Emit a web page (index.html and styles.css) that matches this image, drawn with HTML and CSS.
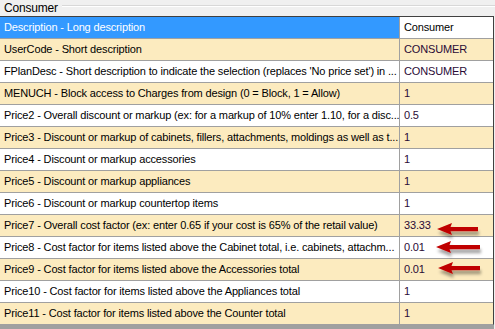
FILE: index.html
```html
<!DOCTYPE html>
<html>
<head>
<meta charset="utf-8">
<link rel="stylesheet" href="styles.css">
</head>
<body>
<div class="frame">
  <div class="caption"><span class="caption-text">Consumer</span><span class="caption-rule"></span></div>
  <div class="grid">
    <div class="row selected"><div class="name">Description - Long description</div><div class="val">Consumer</div></div>
    <div class="row alt"><div class="name">UserCode - Short description</div><div class="val">CONSUMER</div></div>
    <div class="row"><div class="name">FPlanDesc - Short description to indicate the selection (replaces 'No price set') in ...</div><div class="val">CONSUMER</div></div>
    <div class="row alt"><div class="name">MENUCH - Block access to Charges from design (0 = Block, 1 = Allow)</div><div class="val">1</div></div>
    <div class="row"><div class="name">Price2 - Overall discount or markup (ex: for a markup of 10% enter 1.10, for a disc...</div><div class="val">0.5</div></div>
    <div class="row alt"><div class="name">Price3 - Discount or markup of cabinets, fillers, attachments, moldings as well as t...</div><div class="val">1</div></div>
    <div class="row"><div class="name">Price4 - Discount or markup accessories</div><div class="val">1</div></div>
    <div class="row alt"><div class="name">Price5 - Discount or markup appliances</div><div class="val">1</div></div>
    <div class="row"><div class="name">Price6 - Discount or markup countertop items</div><div class="val">1</div></div>
    <div class="row alt"><div class="name">Price7 - Overall cost factor (ex: enter 0.65 if your cost is 65% of the retail value)</div><div class="val">33.33</div></div>
    <div class="row"><div class="name">Price8 - Cost factor for items listed above the Cabinet total, i.e. cabinets, attachm...</div><div class="val">0.01</div></div>
    <div class="row alt"><div class="name">Price9 - Cost factor for items listed above the Accessories total</div><div class="val">0.01</div></div>
    <div class="row"><div class="name">Price10 - Cost factor for items listed above the Appliances total</div><div class="val">1</div></div>
    <div class="row alt"><div class="name">Price11 - Cost factor for items listed above the Counter total</div><div class="val">1</div></div>
  </div>
  <div class="footer"></div>
  <svg class="arrows" width="60" height="66" viewBox="0 0 60 66">
    <defs>
      <filter id="sh" x="-20%" y="-50%" width="150%" height="250%">
        <feDropShadow dx="1" dy="4" stdDeviation="1.7" flood-color="#000" flood-opacity="0.35"/>
      </filter>
    </defs>
    <g fill="#c00000" filter="url(#sh)">
      <polygon points="2,15 17,9 15.5,13 43,13 43,17.2 15.5,17.2 17,21"/>
      <polygon points="1,33 16,27 14.5,31 45,31 45,35.2 14.5,35.2 16,39"/>
      <polygon points="3,54 18,48 16.5,52 45,52 45,56.2 16.5,56.2 18,60"/>
    </g>
  </svg>
</div>
</body>
</html>
```
FILE: styles.css
```css
html, body {
  margin: 0;
  padding: 0;
  background: #f0f0f0;
}
.frame {
  position: relative;
  display: flex;
  flex-direction: column;
  width: 495px;
  height: 329px;
  overflow: hidden;
  background: #f0f0f0;
  font-family: "Liberation Sans", Arial, sans-serif;
  font-size: 11px;
  letter-spacing: -0.15px;
  color: #000;
}
.caption {
  display: flex;
  align-items: center;
  height: 16px;
  flex: none;
  padding-left: 4px;
  font-size: 12px;
  letter-spacing: -0.2px;
}
.caption-text {
  line-height: 14px;
  padding-right: 4px;
}
.caption-rule {
  flex: 1;
  height: 0;
  border-top: 1px solid #d8d8d8;
  border-bottom: 1px solid #fff;
  margin-top: -4px;
}
.grid {
  flex: none;
  width: 493px;
  border-top: 1px solid #404040;
  border-right: 1px solid #404040;
  border-bottom: 1px solid #a0a0a0;
  background: #fff;
}
.footer {
  flex: 1;
  width: 494px;
  background: #a0a0a0;
}
.row {
  display: flex;
  height: 21px;
  border-bottom: 1px solid #a0a0a0;
  background: #fff;
}
.row:last-child {
  border-bottom: none;
}
.row.alt {
  background: #fcebbf;
}
.name {
  width: 395px;
  padding-left: 4px;
  line-height: 21px;
  white-space: nowrap;
  overflow: hidden;
  border-right: 1px solid #a0a0a0;
}
.val {
  flex: 1;
  padding-left: 4px;
  line-height: 21px;
  white-space: nowrap;
  overflow: hidden;
  color: #2a0a36;
}
.row.selected .name {
  background: #3399ff;
  color: #fff;
}
.row.selected .val {
  background: #fff;
  color: #000;
}
.arrows {
  position: absolute;
  left: 435px;
  top: 214px;
}
```
